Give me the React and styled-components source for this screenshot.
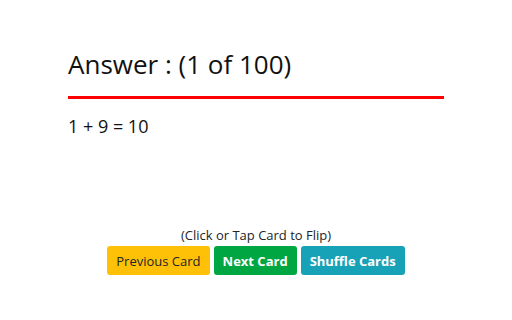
import React from "react";
import styled, { createGlobalStyle } from "styled-components";

const Global = createGlobalStyle`
  html, body { margin: 0; padding: 0; background: #fff; }
  body { font-family: "Comic Sans MS", "Open Sans", sans-serif; color: #212529; }
`;

const Page = styled.div`
  display: flex;
  flex-direction: column;
  align-items: center;
  padding-top: 47px;
`;

const Card = styled.div`
  width: 376px;
  height: 180px;
  cursor: pointer;
`;

const Title = styled.div`
  font-size: 26px;
  line-height: 35px;
  padding-left: 0;
  padding-bottom: 14px;
  border-bottom: 3px solid #ff0000;
  color: #111;
`;

const Answer = styled.div`
  font-size: 18px;
  line-height: 22px;
  margin-top: 16px;
  padding-left: 0;
  color: #111;
`;

const Hint = styled.div`
  font-size: 13px;
  line-height: 16px;
  margin-top: 0;
  color: #212529;
`;

const Buttons = styled.div`
  display: flex;
  gap: 4px;
  margin-top: 3px;
`;

const Button = styled.button`
  font-family: inherit;
  font-size: 13px;
  font-weight: ${p => (p.$bold ? 700 : 400)};
  height: 29px;
  padding: 0 9px;
  border: none;
  border-radius: 3px;
  background: ${p => p.$bg};
  color: ${p => p.$fg};
  cursor: pointer;
`;

export default function App() {
  return (
    <>
      <Global />
      <Page>
        <Card>
          <Title>Answer : (1 of 100)</Title>
          <Answer>1 + 9 = 10</Answer>
        </Card>
        <Hint>(Click or Tap Card to Flip)</Hint>
        <Buttons>
          <Button $bg="#ffc107" $fg="#212529">Previous Card</Button>
          <Button $bg="#00a642" $fg="#fff" $bold>Next Card</Button>
          <Button $bg="#17a2b8" $fg="#fff" $bold>Shuffle Cards</Button>
        </Buttons>
      </Page>
    </>
  );
}
